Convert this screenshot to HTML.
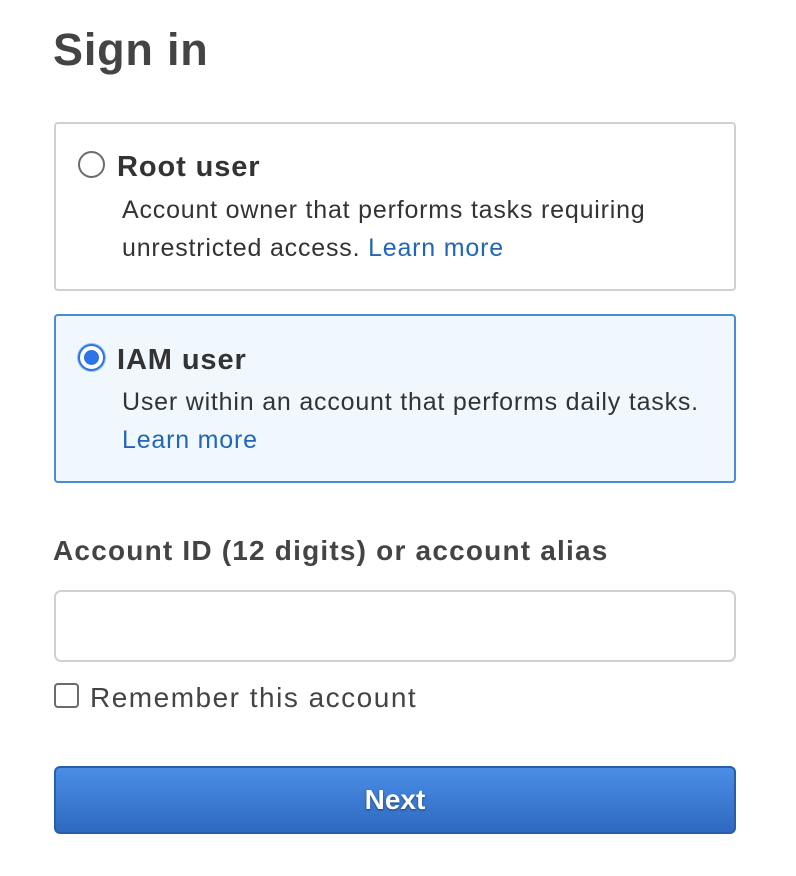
<!DOCTYPE html>
<html><head><meta charset="utf-8"><style>
body{margin:0;width:796px;height:876px;background:#fff;font-family:"Liberation Sans",Arial,sans-serif;color:#444;position:relative;overflow:hidden}
.a{position:absolute;white-space:nowrap}
.box{position:absolute;left:54px;width:678px;height:165px;border:2px solid #d0d0d0;border-radius:4px}
.radio{position:absolute;left:78px;width:27px;height:27px;border:2px solid #6b6b6b;border-radius:50%;box-sizing:border-box;background:#fff}
.h{font-weight:bold;font-size:29px;color:#333;letter-spacing:0.9px}
.d{font-size:25px;color:#333;letter-spacing:0.8px}
a{color:#2266b5;text-decoration:none}
</style></head><body>
<div class="a" style="left:53px;top:24px;font-size:45px;font-weight:bold;color:#444;letter-spacing:0.8px">Sign in</div>
<div class="box" style="top:122px"></div>
<div class="radio" style="top:151px"></div>
<div class="a h" style="left:117px;top:151px">Root user</div>
<div class="a d" style="left:122px;top:196px">Account owner that performs tasks requiring</div>
<div class="a d" style="left:122px;top:234px">unrestricted access. <a>Learn more</a></div>
<div class="box" style="top:314px;background:#f0f7fd;border-color:#4a8ad6"></div>
<div class="radio" style="top:344px;border:2px solid #2f74e6;box-shadow:0 0 0 1px #9cc0f0"><div style="position:absolute;left:4px;top:4px;width:15px;height:15px;border-radius:50%;background:#2f74e6"></div></div>
<div class="a h" style="left:117px;top:344px">IAM user</div>
<div class="a d" style="left:122px;top:388px">User within an account that performs daily tasks.</div>
<div class="a d" style="left:122px;top:426px"><a>Learn more</a></div>
<div class="a" style="left:53px;top:535px;font-size:28px;font-weight:bold;color:#444;letter-spacing:1.2px">Account ID (12 digits) or account alias</div>
<div style="position:absolute;left:54px;top:590px;width:678px;height:68px;border:2px solid #d0d0d0;border-radius:7px"></div>
<div style="position:absolute;left:54px;top:683px;width:21px;height:21px;border:2px solid #6b6b6b;border-radius:4px"></div>
<div class="a" style="left:90px;top:682px;font-size:28px;color:#444;letter-spacing:1.5px">Remember this account</div>
<div style="position:absolute;left:54px;top:766px;width:678px;height:64px;border:2px solid #2a5ea8;border-radius:6px;background:linear-gradient(#4a8ee6,#2f69c0);text-align:center;line-height:64px;color:#fff;font-weight:bold;font-size:28px;text-shadow:0 1px 2px rgba(0,0,0,.5)">Next</div>
</body></html>
